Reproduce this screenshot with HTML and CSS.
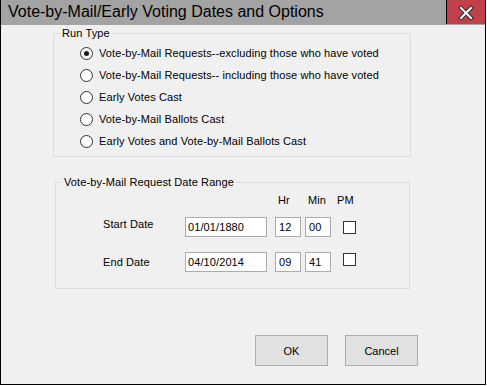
FILE: index.html
```html
<!DOCTYPE html>
<html>
<head>
<meta charset="utf-8">
<link rel="stylesheet" href="styles.css">
</head>
<body>
<div class="window">
  <div class="titlebar">
    <div class="title">Vote-by-Mail/Early Voting Dates and Options</div>
    <div class="close">
      <svg width="16" height="16" viewBox="0 0 16 16">
        <path d="M3 3 L13 13 M13 3 L3 13" stroke="#2b2b2b" stroke-width="4" stroke-linecap="square"/>
        <path d="M3 3 L13 13 M13 3 L3 13" stroke="#ffffff" stroke-width="2" stroke-linecap="square"/>
      </svg>
    </div>
  </div>
  <div class="content">
    <fieldset class="group runtype">
      <legend>Run Type</legend>
      <div class="runtype-body">
        <div class="radio-row"><span class="radio checked"></span><span>Vote-by-Mail Requests--excluding those who have voted</span></div>
        <div class="radio-row"><span class="radio"></span><span>Vote-by-Mail Requests-- including those who have voted</span></div>
        <div class="radio-row"><span class="radio"></span><span>Early Votes Cast</span></div>
        <div class="radio-row"><span class="radio"></span><span>Vote-by-Mail Ballots Cast</span></div>
        <div class="radio-row"><span class="radio"></span><span>Early Votes and Vote-by-Mail Ballots Cast</span></div>
      </div>
    </fieldset>
    <fieldset class="group daterange">
      <legend>Vote-by-Mail Request Date Range</legend>
      <div class="dgrid">
        <div></div><div></div>
        <div class="hdr hdr-hr">Hr</div>
        <div class="hdr hdr-min">Min</div>
        <div class="hdr hdr-pm">PM</div>

        <div class="lbl lbl-start">Start Date</div>
        <div class="cell"><div class="field wide">01/01/1880</div></div>
        <div class="cell"><div class="field small">12</div></div>
        <div class="cell"><div class="field small">00</div></div>
        <div class="cell"><span class="check first"></span></div>

        <div class="lbl">End Date</div>
        <div class="cell"><div class="field wide">04/10/2014</div></div>
        <div class="cell"><div class="field small">09</div></div>
        <div class="cell"><div class="field small">41</div></div>
        <div class="cell"><span class="check second"></span></div>
      </div>
    </fieldset>
    <div class="footer">
      <button class="btn">OK</button>
      <button class="btn">Cancel</button>
    </div>
  </div>
</div>
</body>
</html>
```
FILE: styles.css
```css
html, body {
  margin: 0;
  padding: 0;
  background: #ffffff;
}
body {
  font-family: "Liberation Sans", Arial, sans-serif;
  font-size: 11px;
  letter-spacing: 0.1px;
  color: #000;
}
.window {
  width: 484px;
  height: 384px;
  border-left: 1px solid #000;
  border-right: 1px solid #000;
  border-bottom: 1px solid #000;
  background: #f0f0f0;
  display: flex;
  flex-direction: column;
}
.titlebar {
  height: 25px;
  background: #a3a3a3;
  display: flex;
  align-items: stretch;
}
.title {
  flex: 1;
  font-size: 16px;
  letter-spacing: 0;
  line-height: 24px;
  padding-left: 7px;
  color: #000;
  white-space: nowrap;
}
.close {
  width: 38px;
  height: 24px;
  background: #c1404a;
  border-left: 1px solid #000;
  display: flex;
  align-items: center;
  justify-content: center;
}
.close svg { display: block; margin-top: 1px; }
.content {
  flex: 1;
  display: flex;
  flex-direction: column;
}
.group {
  margin: 0;
  padding: 0;
  min-width: 0;
  border: 1px solid #dcdcdc;
  box-sizing: border-box;
}
.group legend {
  padding: 0 2px;
  margin-left: 6px;
  line-height: 13px;
}
.runtype {
  margin-top: 2px;
  margin-left: 52px;
  width: 358px;
  height: 130px;
}
.runtype-body {
  padding: 2px 0 0 26px;
}
.radio-row {
  height: 22px;
  display: flex;
  align-items: center;
  gap: 6px;
}
.radio {
  width: 13px;
  height: 13px;
  box-sizing: border-box;
  border: 1px solid #333;
  border-radius: 50%;
  background: #fff;
  display: flex;
  align-items: center;
  justify-content: center;
}
.radio.checked::after {
  content: "";
  width: 5px;
  height: 5px;
  border-radius: 50%;
  background: #1a1a1a;
}
.daterange {
  margin-top: 19px;
  margin-left: 54px;
  width: 355px;
  height: 113px;
}
.dgrid {
  display: grid;
  grid-template-columns: 82px 90px 30px 32px auto;
  grid-template-rows: 8px 20px 20px;
  row-gap: 15px;
  padding: 5px 0 0 47px;
}
.hdr {
  line-height: 13px;
  align-self: start;
}
.hdr-hr, .hdr-min { padding-left: 3px; }
.lbl {
  align-self: center;
}
.lbl-start {
  margin-bottom: 6px;
}
.cell {
  display: flex;
  align-items: flex-start;
}
.field {
  height: 20px;
  box-sizing: border-box;
  border: 1px solid #acacac;
  background: #fff;
  padding-left: 2px;
  line-height: 18px;
}
.field.wide { width: 82px; }
.field.small { width: 26px; padding-left: 3px; }
.check {
  width: 13px;
  height: 13px;
  box-sizing: border-box;
  border: 1px solid #333;
  background: #fff;
  margin-left: 6px;
}
.check.first { margin-top: 4px; }
.check.second { margin-top: 1px; }
.footer {
  margin-top: auto;
  display: flex;
  justify-content: flex-end;
  gap: 17px;
  padding-right: 67px;
  padding-bottom: 18px;
}
.btn {
  width: 73px;
  height: 31px;
  box-sizing: border-box;
  border: 1px solid #adadad;
  background: #e1e1e1;
  font-family: "Liberation Sans", Arial, sans-serif;
  font-size: 11px;
  color: #000;
  padding: 0;
  margin: 0;
}
```
